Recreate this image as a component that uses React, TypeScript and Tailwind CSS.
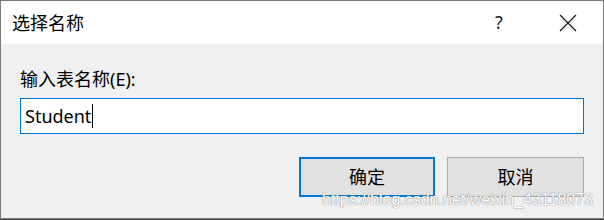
import React from "react";

export default function App() {
  const ui = {
    fontFamily: '"Noto Sans", "Noto Sans CJK SC", sans-serif',
  } as React.CSSProperties;
  return (
    <div className="w-[604px] h-[220px] bg-[#4a4a4a] relative overflow-hidden" style={ui}>
      <div className="w-[604px] h-[219px] border border-[#7a7a7a] bg-[#f0f0f0] flex flex-col">
        <div className="h-[43px] bg-white flex items-center shrink-0">
          <div className="pl-[11px] text-[18px] leading-[24px] text-black flex-1">选择名称</div>
          <div className="w-[20px] text-[18px] leading-[24px] text-[#222] text-center mr-[50px] -mt-[1px]">?</div>
          <svg width="18" height="18" viewBox="0 0 18 18" className="mr-[26px]">
            <path d="M1 1 L17 17 M17 1 L1 17" stroke="#111" strokeWidth="1.1" fill="none" />
          </svg>
        </div>
        <div className="flex flex-col px-[19px]">
          <div className="mt-[22px] text-[18px] leading-[26px] text-black">输入表名称(E):</div>
          <div className="mt-[6px] h-[36px] border border-[#0078d7] bg-white flex items-center pl-[4px]">
            <span className="text-[18px] leading-[24px] text-black">Student</span>
            <span className="w-[1px] h-[24px] bg-black ml-[1px]"></span>
          </div>
          <div className="mt-[23px] flex justify-end gap-[12px]">
            <div className="w-[136px] h-[40px] border-2 border-[#0078d7] bg-[#e1e1e1] flex items-center justify-center text-[18px] text-black">确定</div>
            <div className="w-[137px] h-[40px] border border-[#adadad] bg-[#e1e1e1] flex items-center justify-center text-[18px] text-black">取消</div>
          </div>
        </div>
      </div>
      <div
        className="absolute left-[322px] top-[190px] whitespace-nowrap text-[16px] leading-[20px] text-white"
        style={{
          fontFamily: '"Liberation Sans", Arial, sans-serif',
          textShadow: "0 0 1px rgba(110,110,110,0.9), 0 0 1px rgba(110,110,110,0.6)",
        }}
      >
        https://blog.csdn.net/weixin_43118073
      </div>
    </div>
  );
}
